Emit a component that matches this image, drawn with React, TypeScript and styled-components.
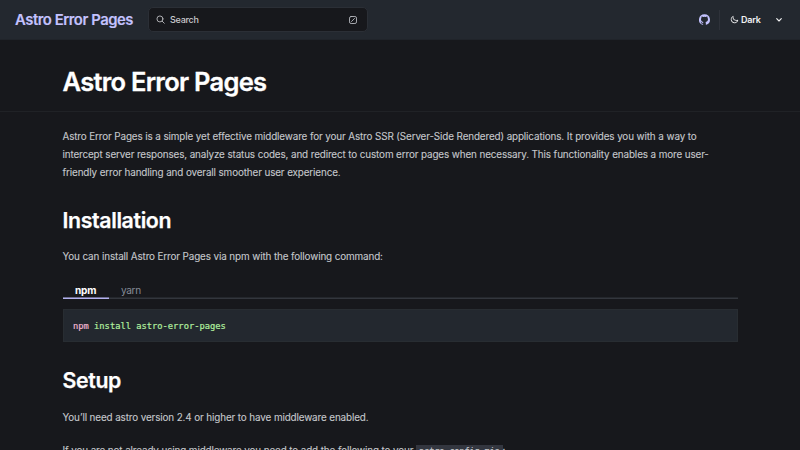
import React from "react";
import styled, { createGlobalStyle } from "styled-components";

const GlobalStyle = createGlobalStyle`
  * { box-sizing: border-box; }
  html, body { margin: 0; background: #17181c; }
  body { height: 450px; overflow: hidden; font-family: Inter, "Liberation Sans", sans-serif; color: #c6c8cc; }
`;

const Page = styled.div`
  width: 800px;
  height: 450px;
  overflow: hidden;
  background: #17181c;
`;

const Header = styled.header`
  height: 40px;
  padding: 0 17px 0 15px;
  display: flex;
  align-items: center;
  background: #23282f;
  border-bottom: 1px solid #20242a;
`;

const SiteTitle = styled.a`
  width: 133px;
  font-size: 14.8px;
  line-height: 20px;
  font-weight: 600;
  letter-spacing: -0.44px;
  white-space: nowrap;
  color: #c3c2fe;
  padding-top: 1px;
  -webkit-text-stroke: 0.15px currentColor;
`;

const Search = styled.div`
  width: 220px;
  height: 25px;
  display: flex;
  align-items: center;
  padding: 0 10px 0 7px;
  border: 1px solid #2b2f36;
  border-radius: 5px;
  background: #17181c;
  color: #c9cacd;
  font-size: 9px;
  font-weight: 500;
  letter-spacing: -0.25px;

  span { flex: 1; margin-left: 5px; }
`;

const Tools = styled.div`
  margin-left: auto;
  display: flex;
  align-items: center;
  color: #f2f2f3;
`;

const Divider = styled.div`
  width: 1px;
  height: 20px;
  margin: 0 10px 0 9px;
  background: #2e323a;
`;

const ThemeLabel = styled.span`
  width: 34px;
  margin-left: 2px;
  font-size: 9px;
  font-weight: 600;
  letter-spacing: -0.25px;
`;

const Wrap = styled.div`
  padding: 0 62.5px;
`;

const TitlePanel = styled(Wrap)`
  height: 72px;
  padding-top: 24px;
  border-bottom: 1px solid #202226;
`;

const Title = styled.h1`
  margin: 0;
  font-size: 25.5px;
  line-height: 35px;
  font-weight: 600;
  letter-spacing: -0.73px;
  color: #fff;
  -webkit-text-stroke: 0.3px currentColor;
`;

const Content = styled(Wrap)`
  padding-top: 15px;
`;

const Heading = styled.h2<{ $top: number; $bottom: number }>`
  margin: ${(p) => p.$top}px 0 ${(p) => p.$bottom}px;
  font-size: 21.3px;
  line-height: 28px;
  font-weight: 600;
  letter-spacing: -0.36px;
  color: #fff;
  -webkit-text-stroke: 0.25px currentColor;
`;

const Text = styled.p<{ $top?: number }>`
  margin: ${(p) => p.$top ?? 0}px 0 0;
  font-size: 9.9px;
  line-height: 18px;
  letter-spacing: -0.135px;
  word-spacing: 0.08px;
  white-space: nowrap;
  -webkit-text-stroke: 0.1px currentColor;
`;

const Tabs = styled.div`
  display: flex;
  height: 20px;
  margin-top: 14px;
  box-shadow: inset 0 -1.5px #33363d;
`;

const Tab = styled.div<{ $active?: boolean }>`
  padding: 0 12.4px;
  height: 20px;
  font-size: 10.1px;
  line-height: 22px;
  letter-spacing: ${(p) => (p.$active ? -0.2 : -0.35)}px;
  font-weight: ${(p) => (p.$active ? 700 : 400)};
  color: ${(p) => (p.$active ? "#fff" : "#868c98")};
  box-shadow: ${(p) => (p.$active ? "inset 0 -1.5px #b3b1ef" : "none")};
`;

const CodeBlock = styled.pre`
  height: 33px;
  margin: 10px 0 0;
  padding: 0 9.5px;
  border: 1px solid #282d32;
  background: #23282f;
  font-family: "DejaVu Sans Mono", monospace;
  font-size: 8.75px;
  line-height: 32px;
  color: #b0ee9e;
  -webkit-text-stroke: 0.2px currentColor;

  b { font-weight: 400; color: #efb5d0; }
`;

const InlineCode = styled.code`
  padding: 1px 3px;
  background: #33363f;
  font-family: "DejaVu Sans Mono", monospace;
  font-size: 8.7px;
  line-height: 1;
  letter-spacing: -0.2px;
`;

const SearchIcon = () => (
  <svg width="9" height="9" viewBox="0 0 24 24" fill="none" stroke="currentColor" strokeWidth="2.2" strokeLinecap="round">
    <circle cx="10.5" cy="10.5" r="8" />
    <path d="m16.5 16.5 5.5 5.5" />
  </svg>
);

const SlashKeyIcon = () => (
  <svg width="8" height="8" viewBox="0 0 8 8" fill="none" stroke="#b8babf" strokeWidth="0.9" strokeLinecap="round">
    <rect x="0.5" y="0.5" width="7" height="7" rx="1.6" />
    <path d="M2.5 5.5 5.5 2.5" />
  </svg>
);

const GithubIcon = () => (
  <svg width="11" height="11" viewBox="0 0 24 24" fill="#c3c2fe">
    <path d="M12 .3a12 12 0 0 0-3.8 23.38c.6.12.83-.26.83-.57L9 21.07c-3.34.72-4.04-1.61-4.04-1.61-.55-1.39-1.34-1.76-1.34-1.76-1.08-.74.09-.73.09-.73 1.2.09 1.83 1.24 1.83 1.24 1.08 1.83 2.81 1.3 3.5 1 .1-.78.42-1.31.76-1.61-2.67-.3-5.47-1.33-5.47-5.93 0-1.31.47-2.38 1.24-3.22-.14-.3-.54-1.52.1-3.18 0 0 1-.32 3.3 1.23a11.5 11.5 0 0 1 6 0c2.28-1.55 3.29-1.23 3.29-1.23.64 1.66.24 2.88.12 3.18a4.65 4.65 0 0 1 1.23 3.22c0 4.61-2.8 5.63-5.48 5.92.42.36.81 1.1.81 2.22l-.01 3.29c0 .31.2.69.82.57A12 12 0 0 0 12 .3Z" />
  </svg>
);

const MoonIcon = () => (
  <svg width="9" height="9" viewBox="0 0 24 24" fill="currentColor">
    <path d="M21.64 13a1 1 0 0 0-1.05-.14 8.049 8.049 0 0 1-3.37.73 8.15 8.15 0 0 1-8.14-8.1 8.59 8.59 0 0 1 .25-2A1 1 0 0 0 8 2.36a10.14 10.14 0 1 0 14 11.69 1 1 0 0 0-.36-1.05Zm-9.5 6.69A8.14 8.14 0 0 1 7.08 5.22v.27a10.15 10.15 0 0 0 10.14 10.14 9.784 9.784 0 0 0 2.1-.22 8.11 8.11 0 0 1-7.18 4.32v-.04Z" />
  </svg>
);

const ChevronIcon = () => (
  <svg width="8" height="8" viewBox="0 0 8 8" fill="none" stroke="currentColor" strokeWidth="1.1" strokeLinecap="round" strokeLinejoin="round">
    <path d="m1.7 2.7 2.3 2.3 2.3-2.3" />
  </svg>
);

export default function App() {
  return (
    <Page>
      <GlobalStyle />
      <Header>
        <SiteTitle>Astro Error Pages</SiteTitle>
        <Search>
          <SearchIcon />
          <span>Search</span>
          <SlashKeyIcon />
        </Search>
        <Tools>
          <GithubIcon />
          <Divider />
          <MoonIcon />
          <ThemeLabel>Dark</ThemeLabel>
          <ChevronIcon />
        </Tools>
      </Header>
      <TitlePanel>
        <Title>Astro Error Pages</Title>
      </TitlePanel>
      <Content>
        <Text>
          Astro Error Pages is a simple yet effective middleware for your Astro SSR (Server-Side Rendered) applications. It provides you with a way to
          <br />
          intercept server responses, analyze status codes, and redirect to custom error pages when necessary. This functionality enables a more user-
          <br />
          friendly error handling and overall smoother user experience.
        </Text>
        <Heading $top={25} $bottom={13}>Installation</Heading>
        <Text>You can install Astro Error Pages via npm with the following command:</Text>
        <Tabs>
          <Tab $active>npm</Tab>
          <Tab>yarn</Tab>
        </Tabs>
        <CodeBlock>
          <b>npm</b> install astro-error-pages
        </CodeBlock>
        <Heading $top={24} $bottom={14}>Setup</Heading>
        <Text>You’ll need astro version 2.4 or higher to have middleware enabled.</Text>
        <Text $top={15}>
          If you are not already using middleware you need to add the following to your <InlineCode>astro.config.mjs</InlineCode>:
        </Text>
      </Content>
    </Page>
  );
}
